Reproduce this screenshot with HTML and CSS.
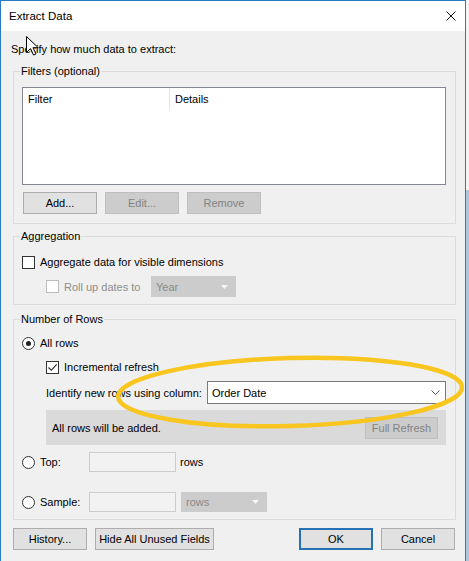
FILE: index.html
```html
<html>
  <head>
    <meta name="viewport" content="width=device-width, initial-scale=1.0">
    <title>Extract Data</title>
    <link rel="stylesheet" href="styles.css">
  </head>
  <body>
    <div class="dialog">
      <div class="titlebar">
        <span class="title">Extract Data</span>
        <svg class="close" viewBox="0 0 10 10" width="10" height="10">
          <path d="M0.5 0.5l9 9M9.5 0.5l-9 9" stroke="#111" stroke-width="1" fill="none"/>
        </svg>
      </div>
      <div class="content">
        <div class="intro">Specify how much data to extract:</div>

        <fieldset class="group filters">
          <legend>Filters (optional)</legend>
          <div class="filter-list">
            <div class="list-head">
              <div class="col col-filter">Filter</div>
              <div class="col col-details">Details</div>
            </div>
          </div>
          <div class="button-row">
            <button class="btn">Add...</button>
            <button class="btn" disabled>Edit...</button>
            <button class="btn" disabled>Remove</button>
          </div>
        </fieldset>

        <fieldset class="group aggregation">
          <legend>Aggregation</legend>
          <div class="check-row agg">
            <span class="check"></span>
            <span>Aggregate data for visible dimensions</span>
          </div>
          <div class="check-row rollup">
            <span class="check off"></span>
            <span class="rollup-label">Roll up dates to</span>
            <div class="combo disabled year">
              <span>Year</span>
              <svg class="tri" viewBox="0 0 7 4" width="7" height="4"><path d="M0 0h7L3.5 4z" fill="#f6f6f6"/></svg>
            </div>
          </div>
        </fieldset>

        <fieldset class="group rows">
          <legend>Number of Rows</legend>
          <div class="check-row all">
            <span class="radio on"></span>
            <span>All rows</span>
          </div>
          <div class="check-row incr">
            <span class="check">
              <svg viewBox="0 0 11 11" width="11" height="11"><path d="M1.5 5.5l2.8 2.8 5.4-6" stroke="#222" stroke-width="1.1" fill="none"/></svg>
            </span>
            <span>Incremental refresh</span>
          </div>
          <div class="identify">
            <span class="identify-label">Identify new rows using column:</span>
            <div class="combo order">
              <span>Order Date</span>
              <svg class="chev" viewBox="0 0 9 5" width="9" height="5"><path d="M0.5 0.5l4 4 4-4" stroke="#555" stroke-width="1" fill="none"/></svg>
            </div>
          </div>
          <div class="notice">
            <span>All rows will be added.</span>
            <button class="btn refresh" disabled>Full Refresh</button>
          </div>
          <div class="limit-row top">
            <span class="radio-label"><span class="radio"></span>Top:</span>
            <span class="field"></span>
            <span class="unit">rows</span>
          </div>
          <div class="limit-row sample">
            <span class="radio-label"><span class="radio"></span>Sample:</span>
            <span class="field"></span>
            <div class="combo disabled unit-select">
              <span>rows</span>
              <svg class="tri" viewBox="0 0 7 4" width="7" height="4"><path d="M0 0h7L3.5 4z" fill="#f6f6f6"/></svg>
            </div>
          </div>
        </fieldset>

        <div class="footer">
          <button class="btn">History...</button>
          <button class="btn wide">Hide All Unused Fields</button>
          <div class="spacer"></div>
          <button class="btn default">OK</button>
          <button class="btn">Cancel</button>
        </div>
      </div>
    </div>

    <!-- annotation drawn over the screenshot -->
    <svg class="marker" viewBox="0 0 469 561" width="469" height="561">
      <ellipse cx="290" cy="392" rx="172" ry="34" transform="rotate(-1.6 290 392)" stroke="#f9c51f" stroke-width="4.5" fill="none"/>
    </svg>
    <svg class="cursor" viewBox="0 0 13 20" width="13" height="20">
      <path d="M0.5 0.5v16l4-4 3 6.5 2.5-1-3-6.3h5.2z" fill="#fff" stroke="#000" stroke-width="1" stroke-linejoin="round"/>
    </svg>
  </body>
</html>
```

FILE: styles.css
```css
html, body {
  margin: 0;
  height: 100%;
}
body {
  position: relative;
  overflow: hidden;
  font-family: "Liberation Sans", Arial, sans-serif;
  font-size: 11px;
  line-height: 16px;
  color: #000;
  background: linear-gradient(180deg, #f4f4f4 0, #f4f4f4 190px, #a9c7df 190px);
}
.dialog {
  width: 464px;
  height: 560px;
  border: 1px solid #2a7ac6;
  border-bottom: none;
  background: #f0f0f0;
}
.titlebar {
  height: 30px;
  background: #fff;
  display: flex;
  align-items: center;
  justify-content: space-between;
  padding: 0 9px 0 8px;
}
.title {
  font-size: 11.5px;
}
.content {
  padding-top: 10px;
}
.intro {
  margin-left: 10px;
}

/* group boxes */
fieldset.group {
  margin: 6px 9px 0 12px;
  padding: 0 0 7px 0;
  border: 1px solid #dcdcdc;
  min-width: 0;
}
legend {
  margin-left: 6px;
  padding: 0 1px;
  line-height: 16px;
}
.filters {
  padding-bottom: 9px !important;
}
.aggregation {
  margin-top: 4px !important;
}

.filter-list {
  margin: 8px 9px 0 8px;
  height: 96px;
  border: 1px solid #828790;
  background: #fff;
}
.list-head {
  display: flex;
  height: 22px;
  line-height: 22px;
}
.col-filter {
  width: 141px;
  padding-left: 5px;
  border-right: 1px solid #e5e5e5;
}
.col-details {
  padding-left: 5px;
}
.button-row {
  display: flex;
  gap: 8px;
  margin: 7px 0 0 9px;
}

.btn {
  width: 74px;
  height: 22px;
  box-sizing: border-box;
  padding: 0;
  border: 1px solid #adadad;
  background: #e1e1e1;
  font: inherit;
  color: #000;
}
.btn:disabled {
  background: #cccccc;
  border-color: #bfbfbf;
  color: #838383;
}
.btn.wide {
  width: 119px;
}
.btn.default {
  border: 2px solid #2670b5;
}
.btn.refresh {
  width: 73px;
}

/* checks and radios */
.check-row {
  display: flex;
  align-items: center;
  margin-left: 8px;
  height: 16px;
}
.check, .radio {
  width: 13px;
  height: 13px;
  box-sizing: border-box;
  border: 1px solid #333;
  background: #fff;
  margin-right: 5px;
  flex: none;
  display: flex;
  align-items: center;
  justify-content: center;
}
.check.off {
  border-color: #bcbcbc;
}
.radio {
  border-radius: 50%;
}
.radio.on::after {
  content: '';
  width: 5px;
  height: 5px;
  border-radius: 50%;
  background: #222;
}
.agg {
  margin-top: 10px;
}
.rollup {
  margin: 6px 0 0 32px;
  height: 21px;
  color: #8d8d8d;
}
.rollup-label {
  width: 87px;
}

.combo {
  box-sizing: border-box;
  display: flex;
  align-items: center;
  justify-content: space-between;
  padding-left: 4px;
}
.combo.disabled {
  background: #cccccc;
  border: 1px solid #cccccc;
  color: #8a8a8a;
}
.combo .tri {
  margin-right: 7px;
}
.year {
  width: 85px;
  height: 21px;
}

.all {
  margin-top: 8px;
}
.incr {
  margin: 8px 0 0 32px;
}
.identify {
  display: flex;
  align-items: center;
  margin: 6px 0 0 32px;
  height: 23px;
}
.identify-label {
  width: 161px;
}
.combo.order {
  width: 239px;
  height: 23px;
  border: 1px solid #7a7a7a;
  background: #fff;
}
.chev {
  margin-right: 5px;
}
.notice {
  display: flex;
  align-items: center;
  justify-content: space-between;
  box-sizing: border-box;
  width: 400px;
  height: 35px;
  margin: 6px 0 0 32px;
  padding: 0 8px 0 6px;
  background: #dadada;
}

.limit-row {
  display: flex;
  align-items: center;
  height: 20px;
  margin-left: 8px;
}
.limit-row.top {
  margin-top: 7px;
}
.limit-row.sample {
  margin-top: 20px;
}
.radio-label {
  width: 67px;
  display: flex;
  align-items: center;
}
.field {
  width: 87px;
  height: 20px;
  box-sizing: border-box;
  border: 1px solid #cccccc;
  background: #f2f2f2;
}
.unit {
  margin-left: 4px;
}
.unit-select {
  width: 86px;
  height: 20px;
  margin-left: 5px;
}

.footer {
  display: flex;
  gap: 8px;
  margin: 8px 10px 0 12px;
}
.spacer {
  flex: 1;
}

.marker {
  position: absolute;
  left: 0;
  top: 0;
  pointer-events: none;
}
.cursor {
  position: absolute;
  left: 26px;
  top: 36px;
  pointer-events: none;
}
```
